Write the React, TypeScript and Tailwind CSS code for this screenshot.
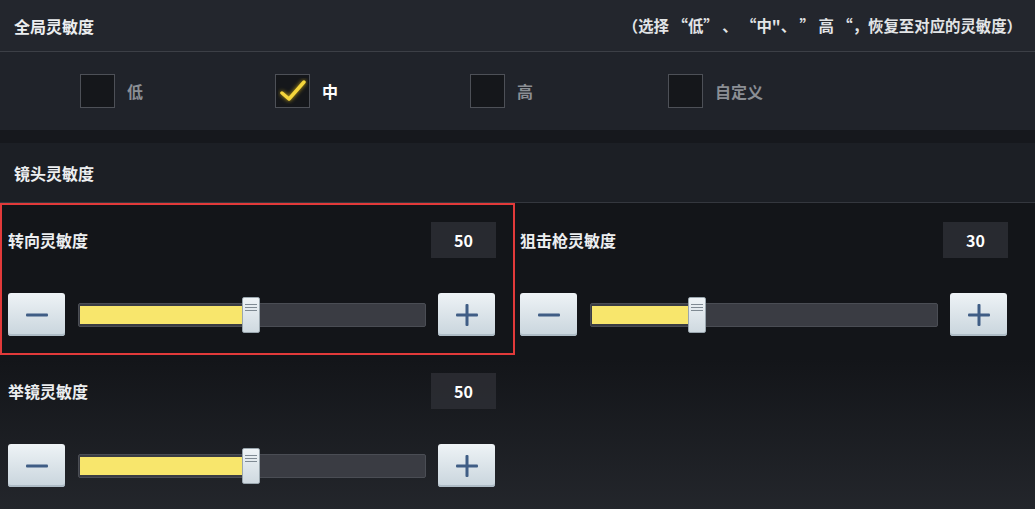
import React from "react";

const font = { fontFamily: '"Noto Sans CJK SC", "Noto Sans", sans-serif' };

const options = [
  { label: "低", checked: false, w: "w-[195px]" },
  { label: "中", checked: true, w: "w-[195px]" },
  { label: "高", checked: false, w: "w-[198px]" },
  { label: "自定义", checked: false, w: "w-[195px]" },
];

function StepButton({ kind }: { kind: "minus" | "plus" }) {
  return (
    <button className="w-[57px] h-[43px] shrink-0 rounded-[3px] bg-gradient-to-b from-[#eef3f6] to-[#c9d5dd] shadow-[inset_0_-2px_0_#aebcc6] flex items-center justify-center">
      <svg width="24" height="24" viewBox="0 0 24 24">
        <rect x="1" y="10.5" width="22" height="3" rx="1" fill="#3f5d85" />
        {kind === "plus" && (
          <rect x="10.5" y="1" width="3" height="22" rx="1" fill="#3f5d85" />
        )}
      </svg>
    </button>
  );
}

function Slider({ value }: { value: number }) {
  // thumb travels 330px across a 348px track
  const left = Math.round((value / 100) * 330) - 2;
  return (
    <div className="flex items-center gap-[12px]">
      <StepButton kind="minus" />
      <div className="relative w-[348px] h-[24px] shrink-0 ml-[1px] rounded-[2px] bg-[#3a3c43] border border-[#4a4d54]">
        <div
          className="absolute left-[1px] top-[2px] bottom-[2px] bg-[#f8e66c]"
          style={{ width: left }}
        />
        <div
          className="absolute top-[-7px] w-[18px] h-[36px] rounded-[2px] bg-gradient-to-b from-[#eef3f6] to-[#cfd9e0] border border-[#9aa6ae] flex flex-col items-center pt-[6px] gap-[2px]"
          style={{ left }}
        >
          <div className="w-[12px] h-[1px] bg-[#7f8a93]" />
          <div className="w-[12px] h-[1px] bg-[#7f8a93]" />
          <div className="w-[12px] h-[1px] bg-[#7f8a93]" />
        </div>
      </div>
      <StepButton kind="plus" />
    </div>
  );
}

function SensItem({
  label,
  value,
  pl,
}: {
  label: string;
  value: number;
  pl: string;
}) {
  return (
    <div className={`flex flex-col ${pl}`}>
      <div className="flex items-center justify-between h-[36px] w-[488px]">
        <span className="text-[16px] font-bold text-[#eceef0]">{label}</span>
        <span className="w-[65px] h-[36px] bg-[#2e3036]/80 flex items-center justify-center text-[16px] font-bold text-white">
          {value}
        </span>
      </div>
      <div className="mt-[35px]">
        <Slider value={value} />
      </div>
    </div>
  );
}

export default function App() {
  return (
    <div
      className="w-[1035px] h-[509px] overflow-hidden bg-[#131519] text-white flex flex-col relative"
      style={font}
    >
      {/* road texture at the bottom */}
      <div className="absolute inset-x-0 bottom-0 h-[150px] bg-gradient-to-t from-[#2a2d33]/70 to-transparent pointer-events-none" />

      {/* global sensitivity header */}
      <div className="h-[52px] shrink-0 bg-[#23262d] border-b border-[#3c3f46] flex items-center justify-between pl-[14px] pr-[13px]">
        <span className="text-[16px] font-bold text-[#eceef0]">全局灵敏度</span>
        <span className="text-[15.4px] font-bold text-[#e2e4e6]">
          （选择 “低” 、 “中"、 ”&nbsp;高&nbsp;“，恢复至对应的灵敏度）
        </span>
      </div>

      {/* preset options */}
      <div className="h-[78px] shrink-0 bg-[#20232a] flex items-center pl-[80px]">
        {options.map((o) => (
          <div key={o.label} className={`${o.w} flex items-center gap-[12px]`}>
            <div className="w-[35px] h-[34px] bg-[#15171b] border border-[#4d5057] flex items-center justify-center">
              {o.checked && (
                <svg width="30" height="26" viewBox="0 0 30 26">
                  <path
                    d="M4 15 L11 21 L26 4"
                    fill="none"
                    stroke="#f5d63c"
                    strokeWidth="3.5"
                    strokeLinecap="round"
                    strokeLinejoin="round"
                    style={{ filter: "drop-shadow(0 0 2px #c9a817)" }}
                  />
                </svg>
              )}
            </div>
            <span
              className={
                o.checked
                  ? "text-[16px] font-bold text-white"
                  : "text-[16px] font-bold text-[#8b8e94]"
              }
            >
              {o.label}
            </span>
          </div>
        ))}
      </div>

      <div className="h-[13px] shrink-0 bg-[#16181d]" />

      {/* lens sensitivity header */}
      <div className="h-[60px] shrink-0 bg-[#1c1f25] border-b border-[#34373e] flex items-center px-[14px]">
        <span className="text-[16px] font-bold text-[#eceef0]">镜头灵敏度</span>
      </div>

      <div className="grid grid-cols-[515px_1fr] relative">
        <div className="border-2 border-[#e23a3a] pt-[17px] pb-[17px]">
          <SensItem label="转向灵敏度" value={50} pl="pl-[6px]" />
        </div>
        <div className="pt-[19px]">
          <SensItem label="狙击枪灵敏度" value={30} pl="pl-[5px]" />
        </div>
        <div className="pt-[18px]">
          <SensItem label="举镜灵敏度" value={50} pl="pl-[8px]" />
        </div>
      </div>
    </div>
  );
}
